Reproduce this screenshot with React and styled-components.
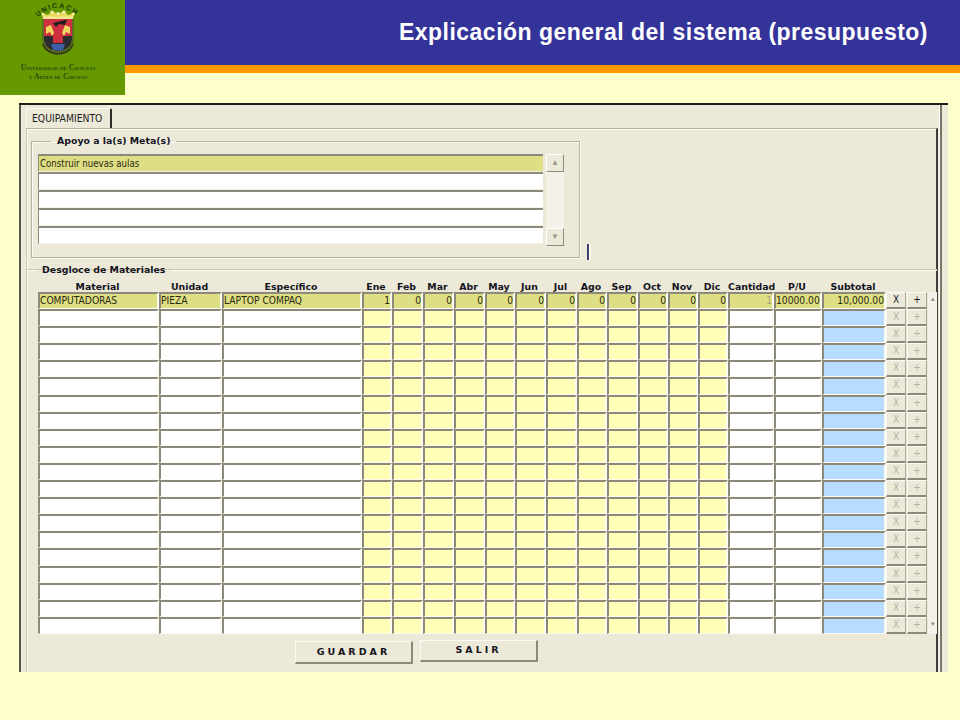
import React from 'react'
import styled, { createGlobalStyle } from 'styled-components'

const GlobalStyle = createGlobalStyle`
  html, body {
    margin: 0;
    background: #ffffcc;
  }
  body {
    width: 960px;
    height: 720px;
    overflow: hidden;
    font-family: "Liberation Sans", Arial, sans-serif;
  }
`

const Header = styled.header`
  display: flex;
  height: 95px;
`

const LogoBox = styled.div`
  width: 116px;
  padding-right: 9px;
  background: #669900;
  display: flex;
  flex-direction: column;
  align-items: center;
`

const LogoText = styled.div`
  margin-top: 7px;
  font-family: "Liberation Serif", serif;
  font-size: 7.7px;
  line-height: 9px;
  font-weight: bold;
  font-variant: small-caps;
  color: #2b4a12;
  text-align: center;
  white-space: nowrap;
`

const Banner = styled.div`
  flex: 1;
  align-self: flex-start;
`

const TitleBar = styled.div`
  height: 65px;
  background: #333399;
  display: flex;
  align-items: center;
  justify-content: flex-end;
  padding-right: 32px;
`

const Title = styled.h1`
  margin: 0;
  font-size: 23px;
  font-weight: bold;
  letter-spacing: 0.48px;
  color: #fff;
`

const OrangeBar = styled.div`
  height: 8px;
  background: #ff9900;
`

const Window = styled.div`
  box-sizing: border-box;
  width: 929px;
  height: 569px;
  margin: 8px 0 0 19px;
  padding-right: 6px;
  background: #ece9d8;
  border-top: 2px solid #1c1c1c;
`

const Frame = styled.div`
  box-sizing: border-box;
  height: 100%;
  padding: 3px 2px 0 5px;
  border-left: 2px solid #55544a;
  border-right: 2px solid #77766c;
  box-shadow: inset -1px 0 0 #fbfaf3;
`

const Tab = styled.div`
  box-sizing: border-box;
  width: 86px;
  height: 20px;
  padding: 3px 0 0 5px;
  font-family: "DejaVu Sans", sans-serif;
  font-stretch: condensed;
  font-size: 10.3px;
  line-height: 13px;
  color: #1a1a1a;
  border-top: 1px solid #fbfaf3;
  border-left: 1px solid #fbfaf3;
  border-right: 2px solid #2d2d28;
  border-radius: 2px 2px 0 0;
`

const Pane = styled.div`
  box-sizing: border-box;
  height: 544px;
  border-top: 1px solid #b5b2a0;
  border-left: 1px solid #c9c6b4;
  border-right: 2px solid #3f3e38;
  box-shadow: inset 1px 1px 0 #fbfaf3;
`

const TopRow = styled.div`
  display: flex;
  align-items: flex-end;
  padding: 6px 0 0 4px;
`

const Group = styled.fieldset`
  box-sizing: border-box;
  width: 549px;
  height: 123px;
  margin: 0;
  padding: 7px 0 0 6px;
  border: 1px solid #b5b2a0;
  box-shadow: inset 1px 1px 0 #fbfaf3, 1px 1px 0 #fbfaf3;
`

const Legend = styled.legend`
  margin-left: ${p => p.$indent}px;
  padding: 0 6px;
  font-family: "DejaVu Sans", sans-serif;
  font-size: 9.4px;
  line-height: 12px;
  font-weight: bold;
  color: #14141e;
`

const ListArea = styled.div`
  display: flex;
  gap: 3px;
`

const MetaList = styled.div`
  width: 505px;
`

const MetaRow = styled.div`
  box-sizing: border-box;
  height: 18px;
  padding-left: 1px;
  font-family: "DejaVu Sans", sans-serif;
  font-stretch: condensed;
  font-size: 9.6px;
  line-height: 15px;
  color: #2a2a10;
  background: ${p => (p.$filled ? '#dede84' : '#fff')};
  border-top: 2px solid #8c897a;
  border-left: 1px solid #8c897a;
  border-bottom: 1px solid #f3f1e2;
`

const ScrollTrack = styled.div`
  box-sizing: border-box;
  width: 18px;
  height: 92px;
  display: flex;
  flex-direction: column;
  justify-content: space-between;
  background: #f4f2e8;
`

const ScrollArrow = styled.div`
  height: 16px;
  font-size: 8px;
  line-height: 15px;
  text-align: center;
  color: #9a988c;
  background: #ece9d8;
  border-top: 1px solid #fff;
  border-left: 1px solid #fff;
  border-right: 1px solid #8d8b7c;
  border-bottom: 1px solid #8d8b7c;
`

const Caret = styled.div`
  width: 2px;
  height: 16px;
  margin: 0 0 -2px 7px;
  background: #3f3f70;
  border-right: 2px solid #fbfaf3;
`

const Breakdown = styled.fieldset`
  margin: 6px 0 0;
  padding: 5px 0 0 11px;
  border: none;
  border-top: 1px solid #fbfaf3;
  box-shadow: 0 -1px 0 #c9c6b4;
`

const columns = '121px 63px 140px 30px 31px 31px 31px 30px 31px 31px 30px 31px 30px 30px 30px 46px 48px 64px 21px 21px 9px'

const HeadRow = styled.div`
  display: grid;
  grid-template-columns: ${columns};
  height: 11px;
`

const HeadCell = styled.div`
  padding-right: 2px;
  font-family: "DejaVu Sans", sans-serif;
  font-size: 9.4px;
  line-height: 11px;
  font-weight: bold;
  color: #14141e;
  text-align: center;
  white-space: nowrap;
`

const Grid = styled.div`
  display: grid;
  grid-template-columns: ${columns};
  grid-auto-rows: 17.1px;
`

const fills = {
  white: '#ffffff',
  month: '#ffffb8',
  total: '#b8dcff',
  filled: '#dede84',
}

const Cell = styled.div`
  box-sizing: border-box;
  overflow: hidden;
  font-family: "DejaVu Sans", sans-serif;
  font-stretch: condensed;
  font-size: 10.2px;
  line-height: 13px;
  white-space: nowrap;
  color: ${p => (p.$muted ? '#a5a47a' : '#2a2a10')};
  text-align: ${p => (p.$right ? 'right' : 'left')};
  background: ${p => fills[p.$fill]};
  background-clip: padding-box;
  border-top: 2px solid #8c897a;
  border-left: 2px solid #8c897a;
  border-right: 2px solid #fbfaf3;
  border-bottom: 1px solid #fbfaf3;
`

const RowButton = styled.div`
  box-sizing: border-box;
  margin-right: 1px;
  font-family: "DejaVu Sans", sans-serif;
  font-stretch: condensed;
  font-size: 10px;
  line-height: 14px;
  text-align: center;
  color: ${p => (p.$disabled ? '#b4b2a4' : '#14141e')};
  background: #ece9d8;
  border-top: 1px solid #fbfaf3;
  border-left: 1px solid #fbfaf3;
  border-right: 1px solid #a8a594;
  border-bottom: 2px solid #8c897a;
`

const ScrollCell = styled.div`
  font-size: 7px;
  line-height: 14px;
  text-align: center;
  color: #8c897a;
  background: #f4f2e8;
`

const Actions = styled.div`
  display: flex;
  align-items: flex-start;
  gap: 7px;
  padding: 6px 0 0 257px;
`

const ActionButton = styled.div`
  box-sizing: border-box;
  width: 118px;
  height: ${p => p.$height}px;
  margin-top: ${p => p.$offset}px;
  font-family: "DejaVu Sans", sans-serif;
  font-size: 9.5px;
  line-height: ${p => p.$height - 4}px;
  font-weight: bold;
  letter-spacing: 3px;
  text-align: center;
  color: #14141e;
  background: #ece9d8;
  border-top: 1px solid #fbfaf3;
  border-left: 1px solid #fbfaf3;
  border-right: 2px solid #8c897a;
  border-bottom: 2px solid #8c897a;
`

const months = ['Ene', 'Feb', 'Mar', 'Abr', 'May', 'Jun', 'Jul', 'Ago', 'Sep', 'Oct', 'Nov', 'Dic']
const ROW_COUNT = 20

const Crest = () => (
  <svg width="60" height="56" viewBox="0 0 60 56" aria-hidden="true">
    <defs>
      <path id="crest-arc" d="M8 19 Q30 -3 53 19" />
    </defs>
    <text fontFamily="Liberation Sans, sans-serif" fontSize="7" fontWeight="bold" fill="#20380c" letterSpacing="1.6">
      <textPath href="#crest-arc" startOffset="5%">UNICACH</textPath>
    </text>
    {/* crown */}
    <path d="M15 18 L13 13 L20 15 L24 11 L30 14 L36 11 L40 15 L47 13 L45 18 Z" fill="#e8d860" />
    <rect x="15" y="16.5" width="30" height="2.5" fill="#f4e890" />
    <circle cx="24" cy="12" r="1.6" fill="#f8f0b0" />
    <circle cx="36" cy="12" r="1.6" fill="#f8f0b0" />
    <circle cx="30" cy="13.5" r="1.6" fill="#f8f0b0" />
    <circle cx="15" cy="14" r="1.3" fill="#f8f0b0" />
    <circle cx="45" cy="14" r="1.3" fill="#f8f0b0" />
    {/* shield with its motto ring */}
    <path d="M14 19 H46 V37 Q46 54 30 55 Q14 54 14 37 Z" fill="#5b6e1e" />
    <path d="M15 44 Q18 53 30 53.6 Q42 53 45 44" fill="none" stroke="#1f2a10" strokeWidth="2" strokeDasharray="1.4 0.8" />
    <path d="M16 19 H44 V37 Q44 50 30 51 Q16 50 16 37 Z" fill="#2b2a2e" />
    <path d="M16 19 H44 V36 H35 V43 H25 V36 H16 Z" fill="#cf3040" />
    <path d="M23 44 H37 L35 50 Q30 51 25 50 Z" fill="#3e5fa8" />
    {/* lions and tree */}
    <path d="M18 27 L23 25 L26 33 L24 36 L22 32 L18 34 Z" fill="#f0d860" />
    <path d="M42 27 L37 25 L34 33 L36 36 L38 32 L42 34 Z" fill="#f0d860" />
    <path d="M25 23 L39 19.5 L37 25 L31 24 L28 27 Z" fill="#23201f" />
  </svg>
)

const MaterialRow = ({ index }) => {
  const filled = index === 0
  const last = index === ROW_COUNT - 1
  const text = filled ? 'filled' : 'white'
  return (
    <>
      <Cell $fill={text}>{filled && 'COMPUTADORAS'}</Cell>
      <Cell $fill={text}>{filled && 'PIEZA'}</Cell>
      <Cell $fill={text}>{filled && 'LAPTOP COMPAQ'}</Cell>
      {months.map((m, i) => (
        <Cell key={m} $right $fill={filled ? 'filled' : 'month'}>
          {filled && (i === 0 ? '1' : '0')}
        </Cell>
      ))}
      <Cell $right $muted $fill={text}>{filled && '1'}</Cell>
      <Cell $fill={text}>{filled && '10000.00'}</Cell>
      <Cell $right $fill={filled ? 'filled' : 'total'}>{filled && '10,000.00'}</Cell>
      <RowButton $disabled={!filled}>X</RowButton>
      <RowButton $disabled={!filled}>+</RowButton>
      <ScrollCell>{filled ? '▴' : last ? '▾' : ''}</ScrollCell>
    </>
  )
}

export default function App() {
  return (
    <>
      <GlobalStyle />
      <Header>
        <LogoBox>
          <Crest />
          <LogoText>
            Universidad de Ciencias
            <br />
            y Artes de Chiapas
          </LogoText>
        </LogoBox>
        <Banner>
          <TitleBar>
            <Title>Explicación general del sistema (presupuesto)</Title>
          </TitleBar>
          <OrangeBar />
        </Banner>
      </Header>
      <Window>
        <Frame>
          <Tab>EQUIPAMIENTO</Tab>
          <Pane>
            <TopRow>
              <Group>
                <Legend $indent={13}>Apoyo a la(s) Meta(s)</Legend>
                <ListArea>
                  <MetaList>
                    <MetaRow $filled>Construir nuevas aulas</MetaRow>
                    <MetaRow />
                    <MetaRow />
                    <MetaRow />
                    <MetaRow />
                  </MetaList>
                  <ScrollTrack>
                    <ScrollArrow>▲</ScrollArrow>
                    <ScrollArrow>▼</ScrollArrow>
                  </ScrollTrack>
                </ListArea>
              </Group>
              <Caret />
            </TopRow>
            <Breakdown>
              <Legend $indent={-2}>Desgloce de Materiales</Legend>
              <HeadRow>
                <HeadCell>Material</HeadCell>
                <HeadCell>Unidad</HeadCell>
                <HeadCell>Específico</HeadCell>
                {months.map(m => (
                  <HeadCell key={m}>{m}</HeadCell>
                ))}
                <HeadCell>Cantidad</HeadCell>
                <HeadCell>P/U</HeadCell>
                <HeadCell>Subtotal</HeadCell>
              </HeadRow>
              <Grid>
                {Array.from({ length: ROW_COUNT }, (_, i) => (
                  <MaterialRow key={i} index={i} />
                ))}
              </Grid>
              <Actions>
                <ActionButton $height={23} $offset={1}>GUARDAR</ActionButton>
                <ActionButton $height={22} $offset={0}>SALIR</ActionButton>
              </Actions>
            </Breakdown>
          </Pane>
        </Frame>
      </Window>
    </>
  )
}
